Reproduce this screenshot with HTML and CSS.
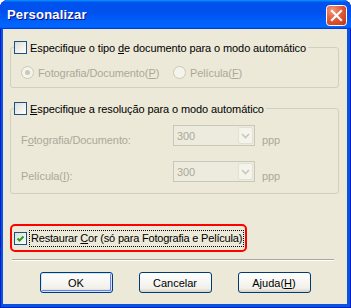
FILE: index.html
```html
<!DOCTYPE html>
<html lang="pt">
<head>
    <meta charset="UTF-8">
    <title>Personalizar</title>
    <link rel="stylesheet" href="styles.css">
</head>
<body>
    <div class="window">
        <div class="titlebar">
            <span class="title">Personalizar</span>
            <span class="close">
                <svg width="21" height="21" viewBox="0 0 21 21">
                    <defs>
                        <radialGradient id="cg" cx="0.3" cy="0.25" r="0.9">
                            <stop offset="0" stop-color="#F49A7C"/>
                            <stop offset="0.45" stop-color="#E2613F"/>
                            <stop offset="1" stop-color="#C8381A"/>
                        </radialGradient>
                    </defs>
                    <rect x="0.5" y="0.5" width="20" height="20" rx="3" fill="url(#cg)" stroke="#fff"/>
                    <path d="M6 6 L15 15 M15 6 L6 15" stroke="#fff" stroke-width="2.2" stroke-linecap="square"/>
                </svg>
            </span>
        </div>

        <div class="client">
            <fieldset class="group">
                <legend>
                    <span class="check"><span class="box"></span><span>Especifique o tipo <u>d</u>e documento para o modo automático</span></span>
                </legend>
                <div class="radios">
                    <span class="radio checked"><span class="circle"></span><span>Fotografia/Documento(<u>P</u>)</span></span>
                    <span class="radio"><span class="circle"></span><span>Película(<u>F</u>)</span></span>
                </div>
            </fieldset>

            <fieldset class="group group-res">
                <legend>
                    <span class="check"><span class="box"></span><span><u>E</u>specifique a resolução para o modo automático</span></span>
                </legend>
                <div class="rows">
                    <span class="field-label">F<u>o</u>tografia/Documento:</span>
                    <span class="select"><span class="value">300</span><span class="arrow"><svg width="9" height="6" viewBox="0 0 9 6"><path d="M1 1 L4.5 4.5 L8 1" fill="none" stroke="#C9C7BA" stroke-width="1.6"/></svg></span></span>
                    <span class="unit">ppp</span>

                    <span class="field-label">Película(<u>I</u>):</span>
                    <span class="select"><span class="value">300</span><span class="arrow"><svg width="9" height="6" viewBox="0 0 9 6"><path d="M1 1 L4.5 4.5 L8 1" fill="none" stroke="#C9C7BA" stroke-width="1.6"/></svg></span></span>
                    <span class="unit">ppp</span>
                </div>
            </fieldset>

            <div class="highlight">
                <span class="box checked">
                    <svg width="11" height="11" viewBox="0 0 11 11"><path d="M2.5 5.5 L4.5 7.5 L8.5 3.5" fill="none" stroke="#21A121" stroke-width="2"/></svg>
                </span>
                <span class="focus">Restaurar <u>C</u>or (só para Fotografia e Película)</span>
            </div>

            <div class="separator"></div>

            <div class="buttons">
                <button class="btn default">OK</button>
                <button class="btn">Cancelar</button>
                <button class="btn">Ajuda(<u>H</u>)</button>
            </div>
        </div>
    </div>
</body>
</html>
```

FILE: styles.css
```css
body {
    margin: 0;
    font-family: "Liberation Sans", Arial, sans-serif;
    font-size: 11px;
    letter-spacing: -0.1px;
    color: #000;
}

.window {
    width: 351px;
    height: 308px;
    box-sizing: border-box;
    background: #0855DD;
    border-radius: 8px 8px 0 0;
    box-shadow: inset 1px 0 #0019CF, inset -1px 0 #0019CF, inset 0 -1px #0019CF;
    display: flex;
    flex-direction: column;
}

.titlebar {
    height: 29px;
    flex-shrink: 0;
    display: flex;
    align-items: flex-start;
    justify-content: space-between;
    padding: 0 4px 0 7px;
    border-radius: 8px 8px 0 0;
    background: linear-gradient(180deg, #0997FF, #0053EE 8%, #0050EE 40%, #0066FF 88%, #0066FF 93%, #005BFF 95%, #003DD7 96%, #003DD7);
}

.title {
    margin-top: 7px;
    color: #fff;
    font-weight: bold;
    font-size: 13px;
    letter-spacing: 0.2px;
    text-shadow: 1px 1px #0F1089;
}

.close {
    margin-top: 5px;
    width: 21px;
    height: 21px;
}

.client {
    flex: 1;
    margin: 0 4px 4px 3px;
    background: #ECE9D8;
    padding-top: 11px;
    display: flex;
    flex-direction: column;
}

.group {
    margin: 0 0 0 7px;
    width: 329px;
    box-sizing: border-box;
    padding: 0;
    min-width: 0;
    border: 1px solid #D0D0BF;
    border-radius: 3px;
}

.group legend {
    margin-left: 3px;
    padding: 0 2px 0 0;
}

.group-res {
    margin-top: 13px;
}

.check {
    display: flex;
    align-items: center;
    height: 15px;
    gap: 3px;
}

.box {
    width: 13px;
    height: 13px;
    box-sizing: border-box;
    border: 1px solid #1C5180;
    background: linear-gradient(135deg, #DCDCD7, #FFFFFF);
    display: flex;
    align-items: center;
    justify-content: center;
    flex-shrink: 0;
}

.radios {
    display: grid;
    grid-template-columns: 152px auto;
    padding: 10px 0 7px 10px;
}

.radio {
    display: flex;
    align-items: center;
    gap: 4px;
    height: 15px;
    color: #ACA899;
}

.circle {
    width: 13px;
    height: 13px;
    box-sizing: border-box;
    border: 1px solid #CAC8BB;
    border-radius: 50%;
    background: #F5F4EA;
    display: flex;
    align-items: center;
    justify-content: center;
}

.radio.checked .circle::after {
    content: "";
    width: 5px;
    height: 5px;
    border-radius: 50%;
    background: #CAC8BB;
}

.rows {
    display: grid;
    grid-template-columns: 152px 82px auto;
    row-gap: 15px;
    align-items: end;
    padding: 9px 0 11px 10px;
    color: #ACA899;
}

.field-label {
    line-height: 13px;
    margin-bottom: -1px;
}

.select {
    height: 21px;
    box-sizing: border-box;
    border: 1px solid #C9C7BA;
    background: #EDEBDE;
    display: flex;
    align-items: center;
    justify-content: space-between;
}

.value {
    padding-left: 3px;
}

.arrow {
    width: 15px;
    height: 17px;
    margin-right: 1px;
    box-sizing: border-box;
    border: 1px solid #E3E1D4;
    border-radius: 2px;
    background: #F4F3EC;
    display: flex;
    align-items: center;
    justify-content: center;
}

.unit {
    margin-left: 7px;
    line-height: 13px;
    margin-bottom: -1px;
}

.highlight {
    margin: 30px 0 0 7px;
    width: 237px;
    height: 28px;
    box-sizing: border-box;
    border: 2px solid #FF0000;
    border-radius: 5px;
    padding: 0 1px 0 2px;
    display: flex;
    align-items: center;
}

.focus {
    flex: 1;
    margin-left: 2px;
    line-height: 15px;
    border: 1px dotted #000;
    padding-left: 1px;
    letter-spacing: -0.2px;
    white-space: nowrap;
}

.separator {
    margin: 7px 13px 0 9px;
    border-top: 1px solid #ACA899;
    border-bottom: 1px solid #FFFFFF;
}

.buttons {
    display: flex;
    justify-content: center;
    gap: 26px;
    margin-top: 11px;
}

.btn {
    width: 73px;
    height: 21px;
    padding: 0;
    font: inherit;
    color: #000;
    border: 1px solid #003C74;
    border-radius: 3px;
    background: linear-gradient(180deg, #FFFFFF, #F1F0EA 80%, #D8D2C6);
}

.btn.default {
    box-shadow: inset 0 0 0 1px #CEE7FF, inset -1px -1px 0 1px #6982EE;
}
```
